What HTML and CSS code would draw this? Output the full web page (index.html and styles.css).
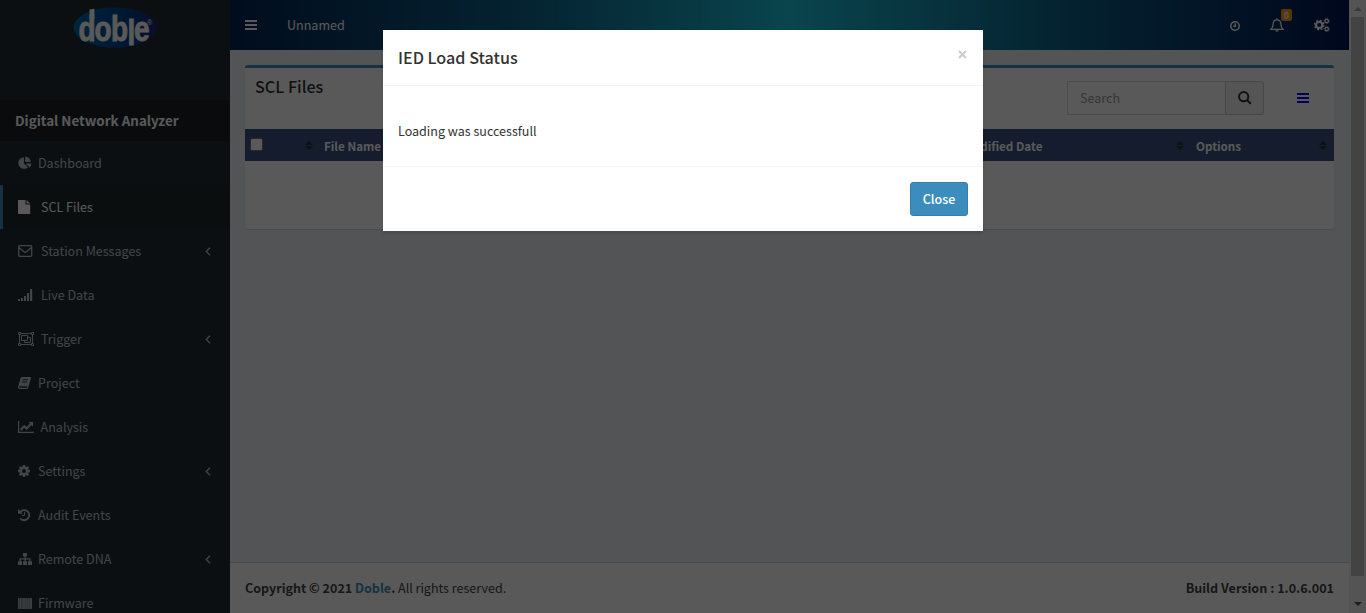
FILE: index.html
```html
<!DOCTYPE html>
<html lang="en">
<head>
<meta charset="utf-8">
<title>Digital Network Analyzer</title>
<link rel="stylesheet" href="styles.css">
</head>
<body>
<div class="app">
  <aside class="sidebar">
    <div class="brand">
      <svg width="84" height="42" viewBox="0 0 84 42">
        <defs><linearGradient id="lg"><stop offset="0" stop-color="#0068a8"/><stop offset=".5" stop-color="#004a98"/><stop offset="1" stop-color="#162a78"/></linearGradient></defs>
        <ellipse cx="42" cy="20.500" rx="41.500" ry="20.300" fill="url(#lg)"/>
        <text transform="translate(4.500 33.800) scale(.8 1)" class="logo-text" x="1.200 21.200 41.900 62.500 70.600">dob<tspan dy="4">l</tspan><tspan dy="-4">e</tspan></text>
        <path d="M16.500 2.500l4.900-.8V12h-4.900z" fill="#fff"/>
        <text x="74" y="17.500" class="logo-reg">®</text>
      </svg>
    </div>
    <div class="product">Digital Network Analyzer</div>
    <nav class="menu">
      <a class="item"><svg class="ic" width="14" height="14" viewBox="0 0 15 14"><path d="M6.300.8v6.400l4.400 4.400A6.200 6.200 0 1 1 6.300.8z"/><path d="M7.700 0A6.200 6.200 0 0 1 13.700 6H7.700zM8.300 7.500h6a6 6 0 0 1-1.900 4.300z"/></svg><span>Dashboard</span></a>
      <a class="item active"><svg class="ic wide" width="15" height="14" viewBox="0 0 15 14"><path d="M0 0h7.500v4.500H12.200V14H0zM8.500 0l3.700 3.600h-3.700z"/></svg><span>SCL Files</span></a>
      <a class="item"><svg class="ic wide" width="15" height="12" viewBox="0 0 15 12"><path class="ln" d="M.7 1.700Q.7.700 1.700.7h11q1 0 1 1v8.600q0 1-1 1h-11q-1 0-1-1zM1 2.500l5 4.300q1.200 1 2.400 0l5-4.300"/></svg><span>Station Messages</span><svg class="arrow" width="6" height="9" viewBox="0 0 6 9"><path d="M5 .8L1.300 4.500 5 8.200"/></svg></a>
      <a class="item"><svg class="ic wide" width="15" height="12" viewBox="0 0 15 12"><path d="M0 10h2v2H0zM3 9h2v3H3zM6 7h2v5H6zM9 4h2v8H9zM12 0h2.200v12H12z"/></svg><span>Live Data</span></a>
      <a class="item"><svg class="ic trig" width="16" height="14" viewBox="0 0 16 14"><path class="thin" d="M1.500 2.500v9M14.500 2.500v9M2.500 1.500h11M2.500 12.500h11M.5.5h2v2h-2zM13.500.5h2v2h-2zM.5 11.500h2v2h-2zM13.500 11.500h2v2h-2zM3.500 3.500h6v5h-6zM9.500 5.500h3v5h-6v-2"/></svg><span>Trigger</span><svg class="arrow" width="6" height="9" viewBox="0 0 6 9"><path d="M5 .8L1.300 4.500 5 8.200"/></svg></a>
      <a class="item"><svg class="ic" width="14" height="12" viewBox="0 0 14 12"><path fill-rule="evenodd" d="M4 0h8q1.200.2.800 1.500L10.300 10.500Q10 12 8.500 12H1.500Q-.5 11.500.2 9L2.500 1.500Q3 0 4 0zM4.700 2.300l-.3 1h5.300l.3-1zM4 4.500l-.3 1H9l.3-1zM1.300 9.300Q1 10.800 2 10.800h6.500q.6 0 .8-.6l.3-.9z"/></svg><span>Project</span></a>
      <a class="item"><svg class="ic chart" width="16" height="12" viewBox="0 0 16 12"><path d="M0 0h1.200v10.800H16V12H0zM10.500 1H15v4.500l-1.500-1.500-5 5-2.300-2.300-3 3-1.200-1.700 4.200-4.200 2.300 2.300 3.500-3.600z"/></svg><span>Analysis</span></a>
      <a class="item"><svg class="ic" width="14" height="12" viewBox="0 0 14 12"><path fill-rule="evenodd" d="M5 0h2l.4 1.600 1 .4L9.800 1.200l1.200 1.300L10.200 3.800l.4 1L12 5v2l-1.400.3-.4 1 .8 1.300-1.300 1.300-1.400-.8-1 .4L7 12H5l-.4-1.500-1-.4-1.400.8L1 9.600l.8-1.300-.4-1L0 7V5l1.400-.2.400-1L1 2.500 2.300 1.200l1.300.8 1-.4zM6 4a2 2 0 1 0 0 4a2 2 0 1 0 0-4z"/></svg><span>Settings</span><svg class="arrow" width="6" height="9" viewBox="0 0 6 9"><path d="M5 .8L1.300 4.500 5 8.200"/></svg></a>
      <a class="item"><svg class="ic" width="14" height="12" viewBox="0 0 14 12"><path class="hist" d="M2 3.200A5.100 5.100 0 1 1 2.300 9.500"/><path d="M0 0v4.800h4.800z"/><path class="thin" d="M6.500 3v3.500H4"/></svg><span>Audit Events</span></a>
      <a class="item"><svg class="ic" width="14" height="12" viewBox="0 0 14 12"><path d="M5 0h4v3.600H7.600v1.700h4.900v2.900H14V12h-4V8.200h1.300V6.500H7.600v1.700H9V12H5V8.200h1.400V6.500H2.700v1.700H4V12H0V8.200h1.500V5.300h4.900V3.600H5z"/></svg><span>Remote DNA</span><svg class="arrow" width="6" height="9" viewBox="0 0 6 9"><path d="M5 .8L1.300 4.500 5 8.200"/></svg></a>
      <a class="item"><svg class="ic" width="14" height="11" viewBox="0 0 14 11"><path opacity=".65" d="M0 0h14v11H0z"/><path opacity=".6" d="M0 0h1v11H0zM2 0h1v11H2zM5 0h2v11H5zM8 0h1v11H8zM10 0h1v11h-1zM12 0h2v11h-2z"/></svg><span>Firmware</span></a>
    </nav>
  </aside>
  <div class="main">
    <header class="topbar">
      <svg class="burger" width="12" height="10" viewBox="0 0 12 10"><path d="M0 0h12v2H0zM0 4h12v2H0zM0 8h12v2H0z"/></svg>
      <span class="site">Unnamed</span>
      <div class="tools">
        <svg class="clock" width="10" height="10" viewBox="0 0 10 10"><circle cx="5" cy="5" r="4.200"/><path d="M5.300 2.500v2.800H3.300"/></svg>
        <span class="bell"><svg width="14" height="14" viewBox="0 0 14 14"><path d="M7 .3v1.500M1 11.300Q3.200 9.300 3.200 5.500Q3.500 1.800 7 1.800T10.800 5.500Q10.800 9.300 13 11.300zM5.700 12.300q1.300 1.600 2.600 0"/></svg><b class="badge">0</b></span>
        <svg class="cogs" width="16" height="14" viewBox="0 0 16 14"><circle cx="5.200" cy="7" r="3.200" stroke-width="2.200"/><circle cx="5.200" cy="7" r="4.700" stroke-width="1.400" stroke-dasharray="1.850 1.850"/><circle cx="12.700" cy="3" r="1.700" stroke-width="1.300"/><circle cx="12.700" cy="3" r="2.600" stroke-width=".8" stroke-dasharray="1 1"/><circle cx="12.700" cy="11" r="1.700" stroke-width="1.300"/><circle cx="12.700" cy="11" r="2.600" stroke-width=".8" stroke-dasharray="1 1"/></svg>
      </div>
    </header>
    <main class="content">
      <section class="box">
        <div class="box-head">
          <h3>SCL Files</h3>
          <div class="search"><span class="field">Search</span><span class="go"><svg width="14" height="14" viewBox="0 0 14 14"><circle cx="5.700" cy="5.700" r="4.600"/><path d="M9 9l3.800 3.800"/></svg></span></div>
          <svg class="list" width="12" height="10" viewBox="0 0 12 10"><path d="M0 0h12v2H0zM0 4h12v2H0zM0 8h12v2H0z"/></svg>
        </div>
        <div class="thead">
          <div class="th check"><i class="cb"></i><svg class="sort" width="8" height="9" viewBox="0 0 8 9"><path d="M0 4l4-4 4 4zM0 5h8L4 9z"/></svg></div>
          <div class="th name">File Name</div>
          <div class="th date"><span>Modified Date</span><svg class="sort" width="8" height="9" viewBox="0 0 8 9"><path d="M0 4l4-4 4 4zM0 5h8L4 9z"/></svg></div>
          <div class="th opts"><span>Options</span><svg class="sort" width="8" height="9" viewBox="0 0 8 9"><path d="M0 4l4-4 4 4zM0 5h8L4 9z"/></svg></div>
        </div>
      </section>
    </main>
    <footer class="footer"><span><b>Copyright © 2021 <a>Doble</a>.</b> All rights reserved.</span><b class="build">Build Version : 1.0.6.001</b></footer>
  </div>
  <div class="scroll"><i class="up"></i><i class="thumb"></i><i class="down"></i></div>
</div>
<div class="overlay">
  <div class="modal">
    <div class="modal-head"><h4>IED Load Status</h4><svg width="9" height="9" viewBox="0 0 9 9"><path d="M1 1l7 7M8 1l-7 7"/></svg></div>
    <div class="modal-body">Loading was successfull</div>
    <div class="modal-foot"><button class="close">Close</button></div>
  </div>
</div>
</body>
</html>
```
FILE: styles.css
```css
* { box-sizing: border-box; }
body { margin: 0; height: 613px; overflow: hidden; font: 12.54px/20px "Noto Sans CJK SC", "Noto Sans", sans-serif; color: #333; }
h3, h4 { margin: 0; font-weight: 500; }
svg { display: block; flex: none; }
.app { display: flex; height: 613px; }

.sidebar { width: 230px; flex: none; background: #222d32; overflow: hidden; }
.brand { height: 100px; padding: 7px 0 0 73px; }
.brand svg { overflow: visible; }
.logo-text { font: bold 35px "Liberation Sans", sans-serif; fill: #fff; stroke: #fff; stroke-width: .9; }
.logo-reg { font: 7px "Liberation Sans", sans-serif; fill: #fff; }
.product { height: 41px; padding: 10px 15px; background: #1a2226; color: #fff; font-size: 13.45px; font-weight: 700; white-space: nowrap; }
.item { height: 44px; display: flex; align-items: center; padding: 0 19px 0 15px; border-left: 3px solid transparent; color: #b8c7ce; }
.item.active { background: #1e282c; border-color: #3c8dbc; color: #fff; }
.item span { flex: 1; }
.ic { fill: currentColor; margin-right: 6px; }
.ic.wide { margin-right: 8px; }
.ic.trig { margin-right: 7px; }
.ic.chart { margin-right: 6.6px; }
.ic .ln { fill: none; stroke: currentColor; stroke-width: 1.3; }
.ic .thin { fill: none; stroke: currentColor; stroke-width: 1; }
.ic .hist { fill: none; stroke: currentColor; stroke-width: 1.8; }
.arrow { fill: none; stroke: #b8c7ce; stroke-width: 1.3; }

.main { flex: 1; display: flex; flex-direction: column; min-width: 0; background: #ecf0f5; }
.topbar { height: 50px; flex: none; display: flex; align-items: center; padding: 0 19px 0 15px; color: #fff; background: linear-gradient(90deg, #032555 0%, #0e6088 25%, #1dc4da 50%, #0e6088 75%, #021654 100%); }
.burger { fill: #fff; }
.site { margin-left: 30px; }
.tools { margin-left: auto; display: flex; align-items: center; }
.clock, .bell svg, .cogs { fill: none; stroke: #fff; }
.clock { stroke-width: 1.5; margin-top: 2px; }
.bell { position: relative; margin: 0 30px; }
.bell svg { stroke-width: 1.3; }
.badge { position: absolute; left: 11px; top: -9px; width: 11px; height: 12px; border-radius: 2px; background: #f39c12; font-size: 8.5px; line-height: 12px; text-align: center; }

.content { flex: 1; padding: 15px; }
.box { height: 164px; background: #fff; border-top: 3px solid #3c8dbc; border-radius: 3px; box-shadow: 0 1px 1px rgba(0,0,0,.1); }
.box-head { height: 61px; display: flex; padding: 0 25px 0 10px; }
.box-head h3 { font-size: 16.15px; line-height: 18px; margin-top: 9px; flex: 1; }
.search { display: flex; height: 34px; margin-top: 13px; }
.field { width: 158px; border: 1px solid #d2d6de; border-right: 0; padding: 6px 12px; color: #999; }
.go { width: 39px; border: 1px solid #ccc; border-radius: 0 3px 3px 0; background: #f4f4f4; display: grid; place-items: center; }
.go svg { fill: none; stroke: #333; stroke-width: 2; }
.list { fill: #00f; margin: 25px 0 0 33px; }
.thead { height: 32px; display: flex; background: #395083; color: #fff; font-weight: 700; font-size: 11.65px; line-height: 34px; }
.th { display: flex; justify-content: space-between; }
.check { width: 79px; padding: 0 11px 0 5px; }
.name { width: 641px; }
.date { width: 219px; margin-right: 12px; }
.date span { margin-left: -2px; }
.opts { flex: 1; padding: 0 7px 0 0; }
.cb { width: 13px; height: 13px; margin-top: 9px; border: 1px solid #767676; border-radius: 2px; background: #fff; }
.sort { margin-top: 12px; fill: #2d333b; }
.footer { height: 51px; flex: none; display: flex; justify-content: space-between; padding: 15px; background: #fff; border-top: 1px solid #d2d6de; color: #444; }
.footer a { color: #3c8dbc; }
.build { font-size: 12.6px; }

.scroll { width: 17px; flex: none; background: #f1f1f1; display: flex; flex-direction: column; align-items: center; }
.thumb { width: 13px; height: 559px; background: #c1c1c1; }
.up { border: 4px solid transparent; border-top: 0; border-bottom-color: #a3a3a3; margin: 7px 0 6px; }
.down { border: 4px solid transparent; border-bottom: 0; border-top-color: #505050; margin-top: 26px; }

.overlay { position: absolute; inset: 0; background: rgba(0,0,0,.65); }
.modal { width: 600px; height: 201px; margin: 30px auto 0; background: #fff; box-shadow: 0 2px 3px rgba(0,0,0,.125); }
.modal-head { height: 56px; padding: 15px; display: flex; justify-content: space-between; border-bottom: 1px solid #f4f4f4; }
.modal-head h4 { font-size: 16.15px; line-height: 25px; }
.modal-head svg { margin: 5px 1px 0 0; stroke: #ccc; stroke-width: 2; }
.modal-body { height: 81px; padding: 35px 15px 0; border-bottom: 1px solid #f4f4f4; }
.modal-foot { padding: 15px; display: flex; justify-content: flex-end; }
.close { width: 58px; height: 34px; padding: 0; border: 1px solid #367fa9; border-radius: 3px; background: #3c8dbc; color: #fff; font: 500 12.5px/20px "Noto Sans CJK SC", sans-serif; }
```
